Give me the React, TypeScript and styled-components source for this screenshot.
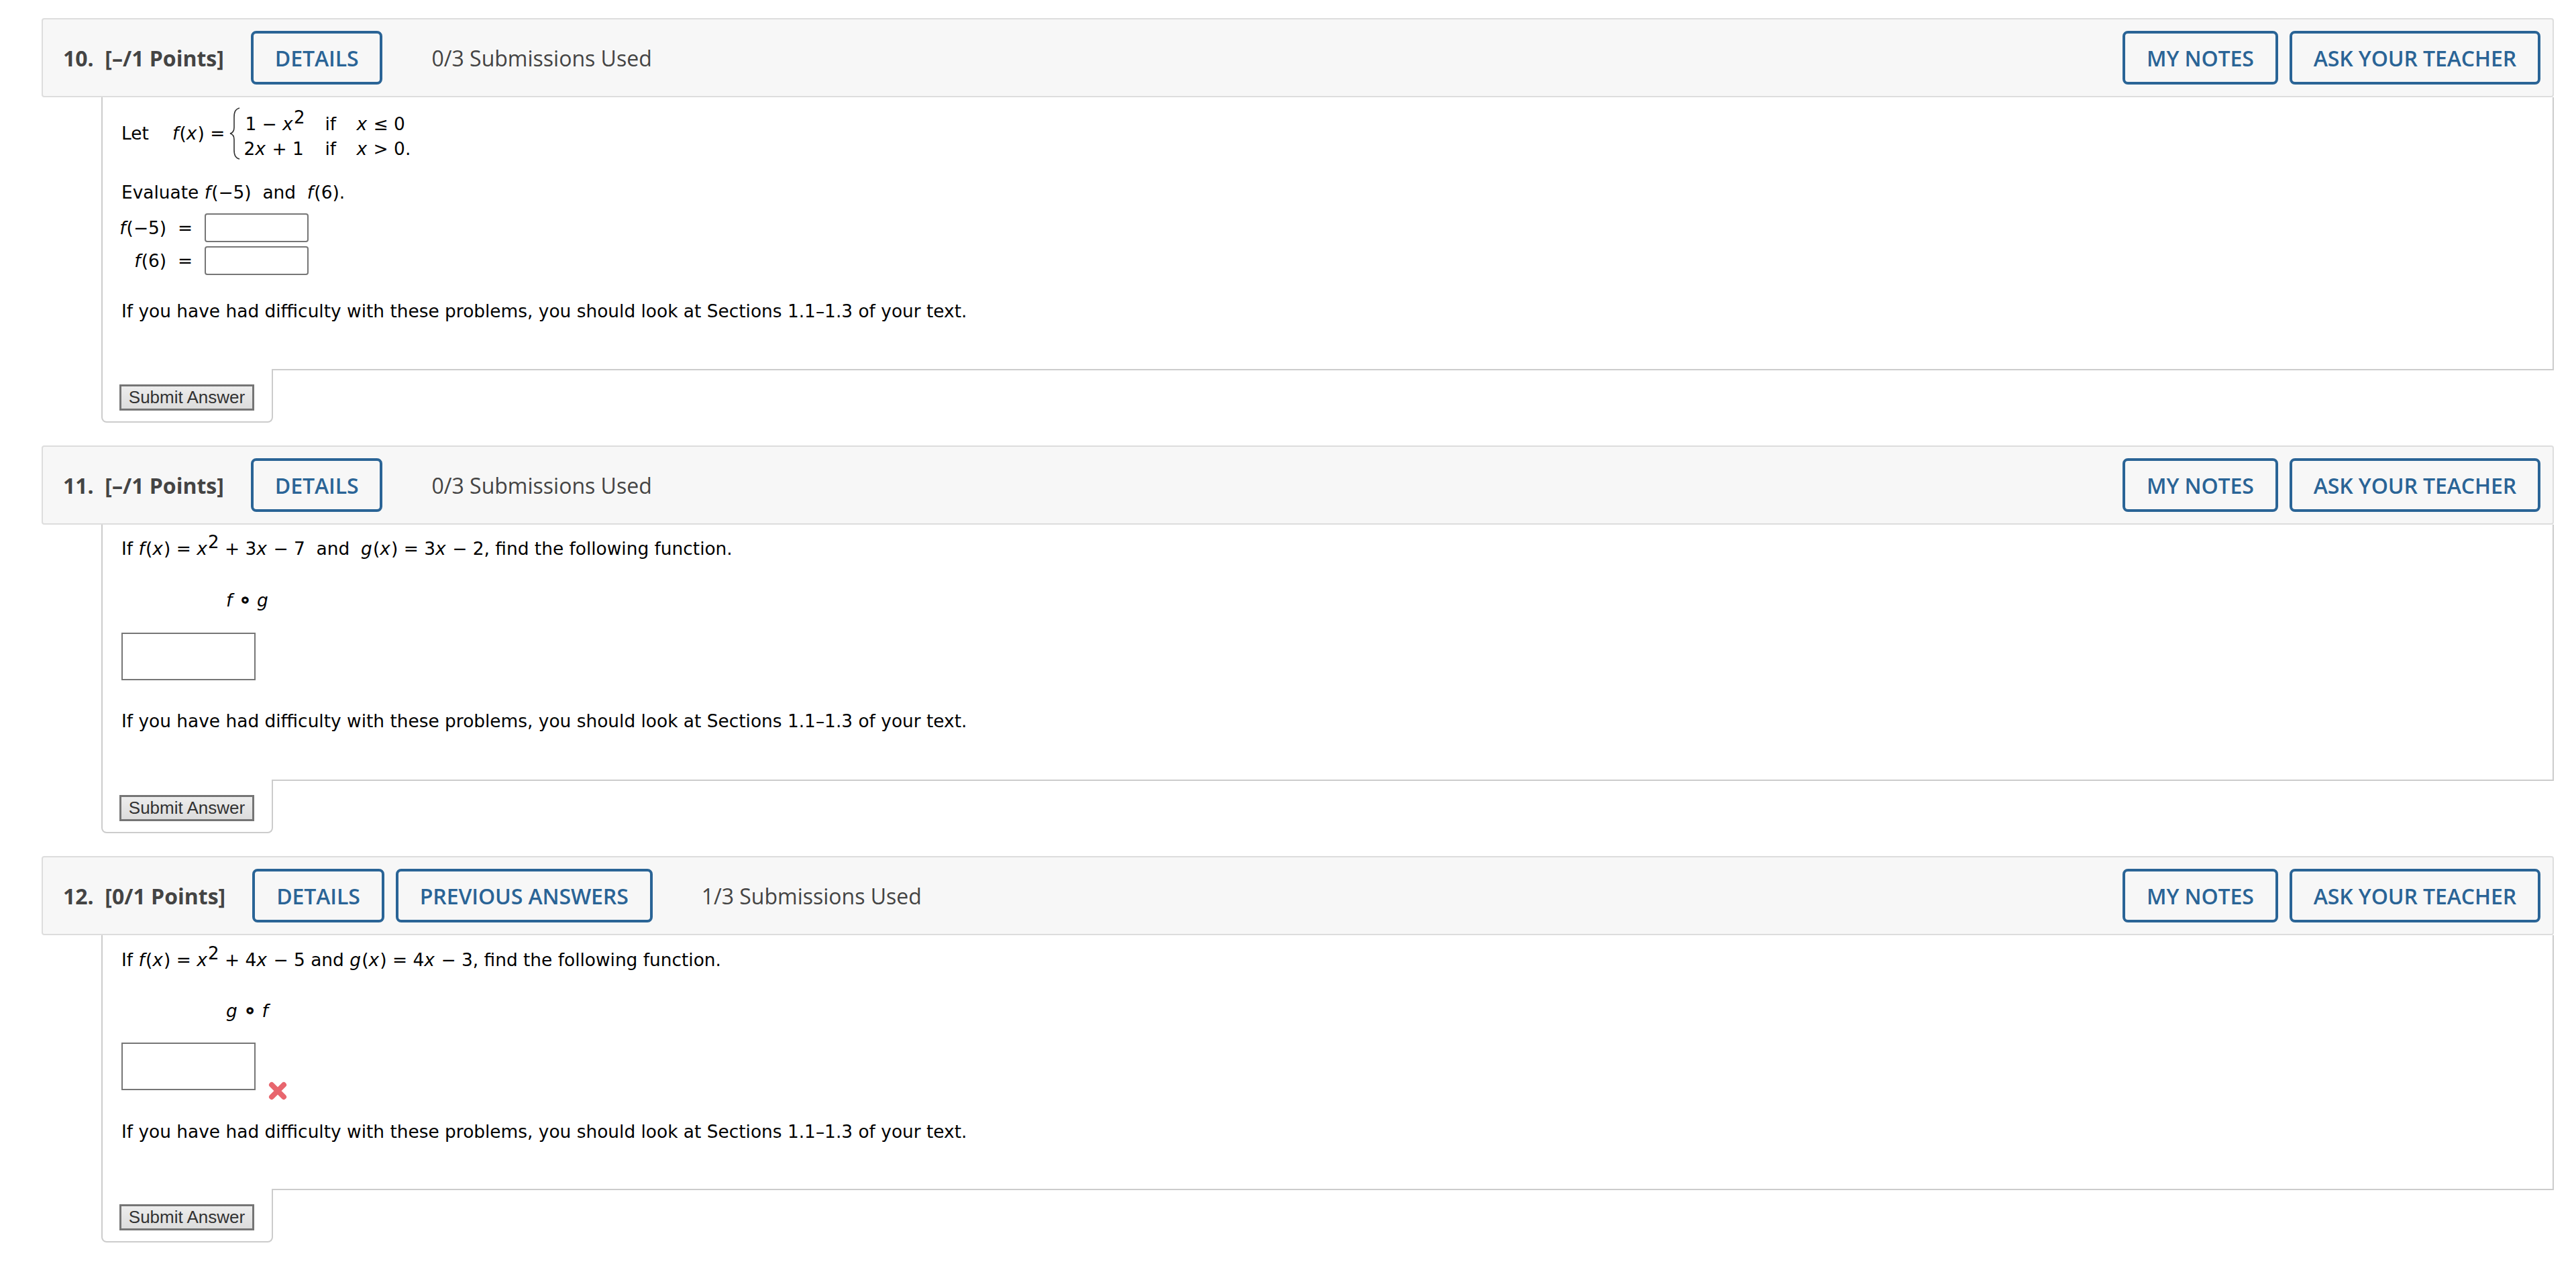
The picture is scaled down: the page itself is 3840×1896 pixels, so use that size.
import React from "react";
import styled, {createGlobalStyle} from "styled-components";

const GlobalStyle = createGlobalStyle`
  html, body {
    margin: 0;
    padding: 0;
    background: #fff;
  }
`;

const Page = styled.div`
  padding: 27px 33px 0 62px;
  display: flex;
  flex-direction: column;
  gap: 34px;
`;

const Question = styled.section`
  display: flex;
  flex-direction: column;
`;

const QuestionHeader = styled.header`
  box-sizing: border-box;
  height: 118px;
  display: flex;
  align-items: center;
  padding: 0 18px 0 30px;
  background: #f7f7f7;
  border: 2px solid #dddddd;
  border-radius: 4px;
  font-family: "Open Sans", sans-serif;
  font-size: 32px;
  color: #444;
`;

const Title = styled.strong`
  font-weight: 700;
  white-space: pre;
  margin-right: 40px;
`;

const HeaderButton = styled.button`
  box-sizing: border-box;
  height: 80px;
  padding: 0 32px;
  background: transparent;
  border: 4px solid #2a6496;
  border-radius: 8px;
  color: #2a6496;
  font-family: "Open Sans", sans-serif;
  font-size: 32px;
  font-weight: 600;
  letter-spacing: -0.1px;
  white-space: nowrap;
`;

const ButtonGroup = styled.div`
  display: flex;
  gap: 17px;
`;

const Submissions = styled.span`
  margin-left: 73px;
`;

const Spacer = styled.div`
  flex: 1;
`;

const QuestionBody = styled.div<{$height: number}>`
  box-sizing: border-box;
  height: ${props => props.$height}px;
  margin-left: 89px;
  padding-left: 28px;
  border-left: 2px solid #cccccc;
  border-right: 2px solid #cccccc;
  font-family: "DejaVu Sans", Verdana, sans-serif;
  font-size: 26.4px;
  color: #000;
`;

const TextLine = styled.p<{$top: number; $indent?: number}>`
  margin: ${props => props.$top}px 0 0 ${props => props.$indent || 0}px;
  height: 36px;
  line-height: 36px;
  white-space: pre;
`;

const Var = styled.i`
  padding-right: 1.2px;
`;

const Sup = styled.sup`
  font-size: 26px;
  line-height: 0;
  vertical-align: 10px;
`;

const Piecewise = styled.div`
  display: flex;
  align-items: center;
  height: 78px;
  margin-top: 15px;
  white-space: pre;
`;

const LetLabel = styled.span`
  width: 76px;
  margin-bottom: 2px;
`;

const FunctionLabel = styled.span`
  margin-bottom: 2px;
`;

const Brace = styled.svg`
  width: 16px;
  height: 78px;
  margin: 0 5px 0 7px;
`;

const CaseGrid = styled.div`
  display: grid;
  grid-template-columns: 121px 47px auto;
  grid-auto-rows: 37px;
  line-height: 37px;
  margin-top: 7px;
`;

const FirstCase = styled.span`
  padding-left: 2px;
`;

const AnswerRow = styled.div<{$top: number}>`
  display: flex;
  align-items: center;
  justify-content: flex-end;
  width: 279px;
  margin-top: ${props => props.$top}px;
  white-space: pre;
`;

const SmallInput = styled.input`
  box-sizing: border-box;
  width: 155px;
  height: 43px;
  margin-left: 18px;
  background: #fff;
  border: 2px solid #767676;
  border-radius: 4px;
`;

const WideInputRow = styled.div<{$top: number}>`
  display: flex;
  align-items: flex-end;
  margin-top: ${props => props.$top}px;
`;

const WideInput = styled.input`
  box-sizing: border-box;
  width: 200px;
  height: 71px;
  background: #fff;
  border: 2px solid #767676;
  border-radius: 0;
`;

const WrongMark = styled.svg`
  width: 28px;
  height: 28px;
  margin: 0 0 -15px 19px;
`;

const Ring = styled.span`
  font-size: 30px;
  line-height: 0;
  -webkit-text-stroke: 1.2px #000;
`;

const QuestionFooter = styled.div`
  display: flex;
`;

const SubmitTab = styled.div`
  box-sizing: border-box;
  width: 256px;
  height: 80px;
  margin-left: 89px;
  padding: 23px 0 0 25px;
  border: 2px solid #cccccc;
  border-top: 0;
  border-radius: 0 0 8px 8px;
`;

const SubmitButton = styled.button`
  box-sizing: border-box;
  display: block;
  width: 201px;
  height: 39px;
  padding: 0;
  background: linear-gradient(#ededed, #dcdcdc);
  border: 3px solid #757575;
  border-radius: 0;
  color: #333;
  font-family: "Liberation Sans", Arial, sans-serif;
  font-size: 26px;
`;

const FooterFill = styled.div`
  flex: 1;
  border-top: 2px solid #cccccc;
`;

const HELP_TEXT = "If you have had difficulty with these problems, you should look at Sections 1.1–1.3 of your text.";

const Header: React.FC<{title: string; used: string; previous?: boolean}> = ({title, used, previous}) => (
    <QuestionHeader>
        <Title>{title}</Title>
        <ButtonGroup>
            <HeaderButton>DETAILS</HeaderButton>
            {previous && <HeaderButton>PREVIOUS ANSWERS</HeaderButton>}
        </ButtonGroup>
        <Submissions>{used}</Submissions>
        <Spacer/>
        <ButtonGroup>
            <HeaderButton>MY NOTES</HeaderButton>
            <HeaderButton>ASK YOUR TEACHER</HeaderButton>
        </ButtonGroup>
    </QuestionHeader>
);

const Footer: React.FC = () => (
    <QuestionFooter>
        <SubmitTab>
            <SubmitButton>Submit Answer</SubmitButton>
        </SubmitTab>
        <FooterFill/>
    </QuestionFooter>
);

const App: React.FC = () => {
    return (
        <Page>
            <GlobalStyle/>
            <Question>
                <Header title="10.  [–/1 Points]" used="0/3 Submissions Used"/>
                <QuestionBody $height={405}>
                    <Piecewise>
                        <LetLabel>Let</LetLabel>
                        <FunctionLabel><Var>f</Var>(<Var>x</Var>) =</FunctionLabel>
                        <Brace viewBox="0 0 16 78">
                            <path d="M15 1 C8 3 7 8 7 15 L7 30 C7 35 5 38 1 39 C5 40 7 43 7 48 L7 63 C7 70 8 75 15 77" fill="none" stroke="#333" strokeWidth="1.6"/>
                        </Brace>
                        <CaseGrid>
                            <FirstCase>1 − <Var>x</Var><Sup>2</Sup></FirstCase>
                            <span>if</span>
                            <span><Var>x</Var> ≤ 0</span>
                            <span>2<Var>x</Var> + 1</span>
                            <span>if</span>
                            <span><Var>x</Var> &gt; 0.</span>
                        </CaseGrid>
                    </Piecewise>
                    <TextLine $top={31}>Evaluate <Var>f</Var>(−5)  and  <Var>f</Var>(6).</TextLine>
                    <AnswerRow $top={13}><Var>f</Var>(−5)  =<SmallInput/></AnswerRow>
                    <AnswerRow $top={6}><Var>f</Var>(6)  =<SmallInput/></AnswerRow>
                    <TextLine $top={36}>{HELP_TEXT}</TextLine>
                </QuestionBody>
                <Footer/>
            </Question>
            <Question>
                <Header title="11.  [–/1 Points]" used="0/3 Submissions Used"/>
                <QuestionBody $height={380}>
                    <TextLine $top={18}>If <Var>f</Var>(<Var>x</Var>) = <Var>x</Var><Sup>2</Sup> + 3<Var>x</Var> − 7  and  <Var>g</Var>(<Var>x</Var>) = 3<Var>x</Var> − 2, find the following function.</TextLine>
                    <TextLine $top={41} $indent={156}><Var>f</Var> <Ring>∘</Ring> <Var>g</Var></TextLine>
                    <WideInputRow $top={30}>
                        <WideInput/>
                    </WideInputRow>
                    <TextLine $top={43}>{HELP_TEXT}</TextLine>
                </QuestionBody>
                <Footer/>
            </Question>
            <Question>
                <Header title="12.  [0/1 Points]" used="1/3 Submissions Used" previous/>
                <QuestionBody $height={378}>
                    <TextLine $top={19}>If <Var>f</Var>(<Var>x</Var>) = <Var>x</Var><Sup>2</Sup> + 4<Var>x</Var> − 5 and <Var>g</Var>(<Var>x</Var>) = 4<Var>x</Var> − 3, find the following function.</TextLine>
                    <TextLine $top={40} $indent={156}><Var>g</Var> <Ring>∘</Ring> <Var>f</Var></TextLine>
                    <WideInputRow $top={29}>
                        <WideInput/>
                        <WrongMark viewBox="0 0 28 28">
                            <path d="M5 5 L23 23 M23 5 L5 23" fill="none" stroke="#e8666e" strokeWidth="8" strokeLinecap="round"/>
                        </WrongMark>
                    </WideInputRow>
                    <TextLine $top={44}>{HELP_TEXT}</TextLine>
                </QuestionBody>
                <Footer/>
            </Question>
        </Page>
    );
};

export default App;
